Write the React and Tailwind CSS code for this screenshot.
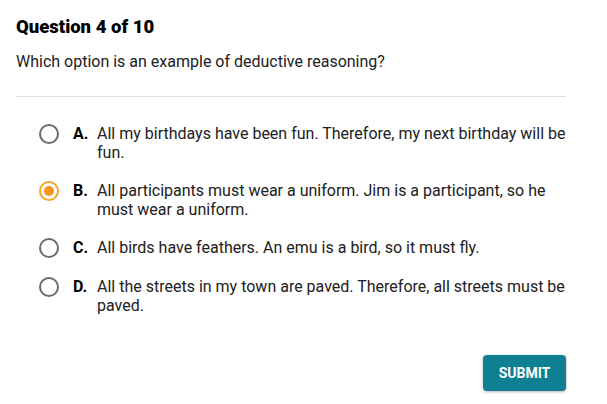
import React from "react";

const options = [
  { l: "A.", t: "All my birthdays have been fun. Therefore, my next birthday will be fun." },
  { l: "B.", t: "All participants must wear a uniform. Jim is a participant, so he must wear a uniform.", sel: true },
  { l: "C.", t: "All birds have feathers. An emu is a bird, so it must fly." },
  { l: "D.", t: "All the streets in my town are paved. Therefore, all streets must be paved." },
];

function Radio({ sel }) {
  return sel ? (
    <div className="w-[20px] h-[20px] rounded-full border-2 border-[#f6a623] flex items-center justify-center shrink-0">
      <div className="w-[10px] h-[10px] rounded-full bg-[#f7941d]" />
    </div>
  ) : (
    <div className="w-[20px] h-[20px] rounded-full border-2 border-[#6b6b6b] shrink-0" />
  );
}

export default function App() {
  return (
    <div className="w-[607px] h-[404px] bg-white text-[#212121] px-4 pt-[16px]" style={{ fontFamily: "Roboto, 'Liberation Sans', sans-serif" }}>
      <h1 className="text-[18.5px] font-black leading-[22px] text-black">Question 4 of 10</h1>
      <p className="text-[16px] leading-[20px] mt-[14px]">Which option is an example of deductive reasoning?</p>
      <div className="mt-[24px] w-[550px] h-px bg-[#e0e0e0]" />
      <div className="pl-[23px] pt-[27px] flex flex-col gap-[19px] w-[560px]">
        {options.map((o) => (
          <div key={o.l} className="flex items-start">
            <Radio sel={o.sel} />
            <div className="ml-[14px] w-[24px] font-bold text-[16px] leading-[19px] text-black">{o.l}</div>
            <div className="text-[16px] leading-[19px] flex-1">{o.t}</div>
          </div>
        ))}
      </div>
      <div className="flex justify-end w-[550px] mt-[40px]">
        <button className="bg-[#0f8093] text-white font-bold text-[14px] rounded-[4px] w-[83px] h-[36px] shadow-[0_1px_3px_rgba(0,0,0,0.3)]">SUBMIT</button>
      </div>
    </div>
  );
}
